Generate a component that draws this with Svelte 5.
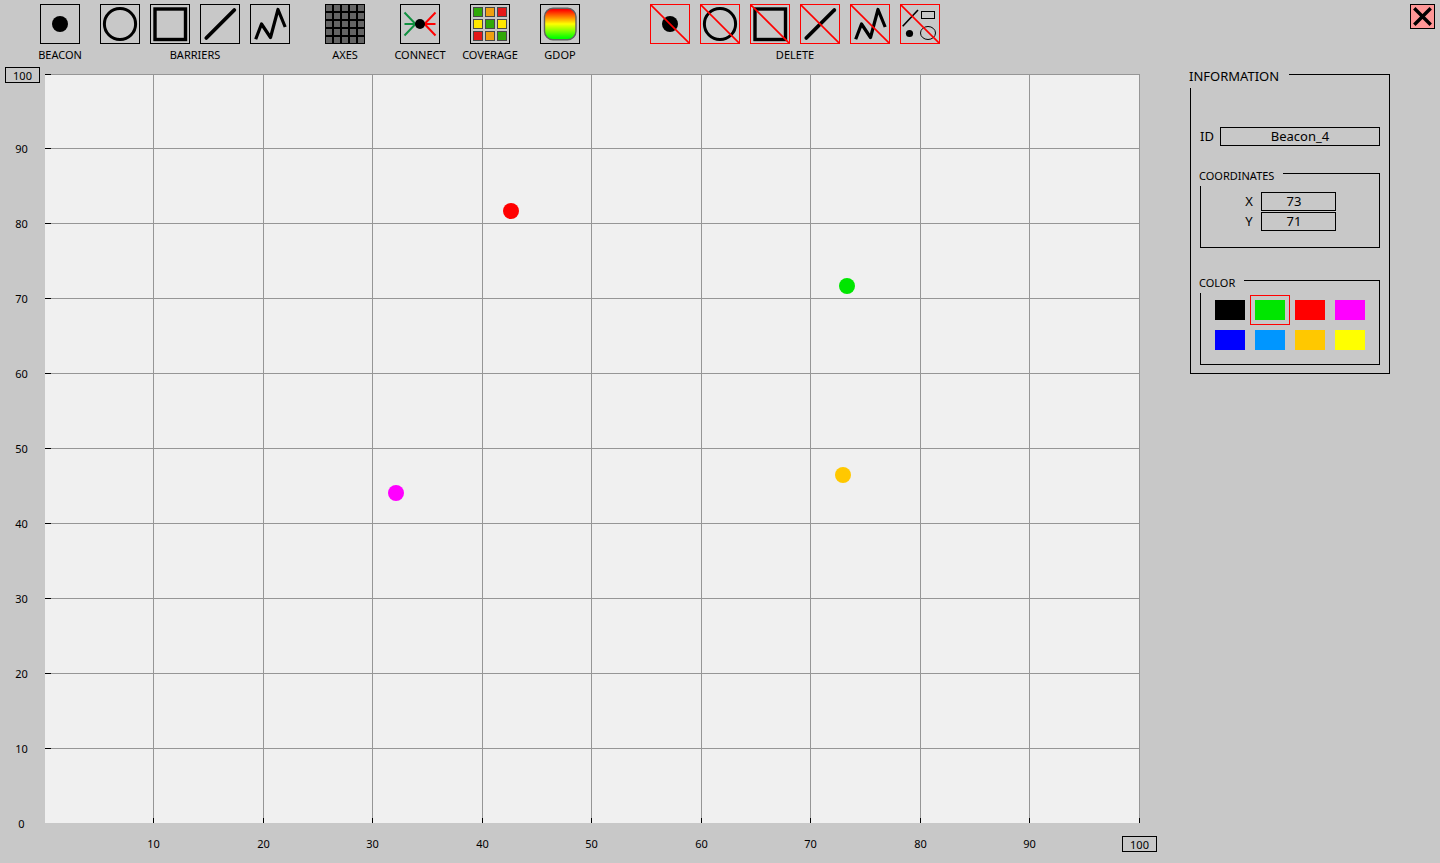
<script>
  const steps = [0, 10, 20, 30, 40, 50, 60, 70, 80, 90];
  const lines = [10, 20, 30, 40, 50, 60, 70, 80, 90, 100];

  const groups = [
    { label: 'BEACON', tools: [{ kind: 'dot', name: 'Add beacon' }] },
    {
      label: 'BARRIERS',
      tools: [
        { kind: 'circle', name: 'Circle barrier' },
        { kind: 'square', name: 'Rectangle barrier' },
        { kind: 'line', name: 'Line barrier' },
        { kind: 'zigzag', name: 'Polyline barrier' }
      ]
    },
    { label: 'AXES', gap: 'wide', tools: [{ kind: 'axes', name: 'Toggle axes' }] },
    { label: 'CONNECT', gap: 'wide', tools: [{ kind: 'connect', name: 'Connect' }] },
    { label: 'COVERAGE', gap: 'medium', tools: [{ kind: 'coverage', name: 'Coverage' }] },
    { label: 'GDOP', gap: 'medium', tools: [{ kind: 'gdop', name: 'GDOP' }] },
    {
      label: 'DELETE',
      gap: 'far',
      remove: true,
      tools: [
        { kind: 'dot', name: 'Delete beacon' },
        { kind: 'circle', name: 'Delete circle' },
        { kind: 'square', name: 'Delete rectangle' },
        { kind: 'line', name: 'Delete line' },
        { kind: 'zigzag', name: 'Delete polyline' },
        { kind: 'all', name: 'Delete everything' }
      ]
    }
  ];

  const cells = ['#30a808', '#f0a010', '#e41818', '#ffe600', '#30a808', '#ffe600', '#e41818', '#f0a010', '#30a808'];

  const beacons = [
    { name: 'Beacon_1', x: 42.56, y: 81.71, color: '#ff0000' },
    { name: 'Beacon_2', x: 32.05, y: 44.06, color: '#ff00ff' },
    { name: 'Beacon_3', x: 72.88, y: 46.46, color: '#ffc800' },
    { name: 'Beacon_4', x: 73.24, y: 71.7, color: '#00e600' }
  ];

  const colors = [
    ['Black', '#000000'],
    ['Green', '#00e600'],
    ['Red', '#ff0000'],
    ['Magenta', '#ff00ff'],
    ['Blue', '#0000ff'],
    ['Azure', '#0096ff'],
    ['Amber', '#ffc800'],
    ['Yellow', '#ffff00']
  ];

  let selected = $state('#00e600');
</script>

{#snippet icon(kind, remove)}
  <svg viewBox="1 1 38 38" aria-hidden="true">
    {#if kind === 'dot'}
      <circle cx="20" cy="20" r="8" />
    {:else if kind === 'circle'}
      <circle cx="20" cy="20" r="15.6" fill="none" stroke="#000" stroke-width="3" />
    {:else if kind === 'square'}
      <rect x="5" y="5" width="30.5" height="30.5" fill="none" stroke="#000" stroke-width="3.4" />
    {:else if kind === 'line'}
      <path d="M6.3 34 34.3 6" stroke="#000" stroke-width="3.8" stroke-linecap="round" />
    {:else if kind === 'zigzag'}
      <path d="M5.7 35.2 11.5 20 20.5 33.5 28 5.5 35.2 23" fill="none" stroke="#000" stroke-width="3.2" stroke-linejoin="round" />
    {:else if kind === 'axes'}
      <rect width="40" height="40" />
      {#each [1, 9, 17, 25, 33] as y}
        {#each [1, 9, 17, 25, 33] as x}
          <rect {x} {y} width="6" height="6" fill="#646464" />
        {/each}
      {/each}
    {:else if kind === 'connect'}
      <path d="M4.5 8.5 15.5 20 4.5 31.5M4.5 20H15.5" fill="none" stroke="#109040" stroke-width="2" />
      <path d="M35.5 8.5 24.5 20 35.5 31.5M35.5 20H24.5" fill="none" stroke="#ff0000" stroke-width="2" />
      <circle cx="20" cy="20" r="5" />
    {:else if kind === 'coverage'}
      {#each cells as fill, i}
        <rect x={3.5 + (i % 3) * 12} y={3.5 + Math.floor(i / 3) * 12} width="9" height="9" {fill} stroke="#484848" />
      {/each}
    {:else if kind === 'gdop'}
      <defs>
        <linearGradient id="gdop-fill" x1="0" y1="0" x2="0" y2="1">
          <stop offset="0.05" stop-color="#ff0000" />
          <stop offset="0.5" stop-color="#ffff00" />
          <stop offset="0.95" stop-color="#00ff00" />
        </linearGradient>
      </defs>
      <rect x="4.5" y="4.2" width="31.5" height="31.5" rx="8.5" fill="url(#gdop-fill)" stroke="#606060" stroke-width="1.4" />
    {:else if kind === 'all'}
      <path d="M2.7 22.3 18 6" stroke="#000" stroke-width="1.6" />
      <rect x="21.5" y="7.5" width="13" height="7" fill="none" stroke="#000" />
      <circle cx="9.5" cy="29.5" r="3.6" />
      <ellipse cx="28" cy="29" rx="7.5" ry="6.5" fill="none" stroke="#000" />
    {/if}
    {#if remove}
      <path d="M0 0 40 40" stroke="#ff0000" stroke-width="1.6" />
    {/if}
  </svg>
{/snippet}

<div class="app">
  <header class="toolbar">
    {#each groups as group}
      <div class="group {group.gap ?? ''}">
        <div class="tools">
          {#each group.tools as tool}
            <button class="tool" class:remove={group.remove} type="button" aria-label={tool.name}>
              {@render icon(tool.kind, group.remove)}
            </button>
          {/each}
        </div>
        <span class="caption">{group.label}</span>
      </div>
    {/each}
    <button class="close" type="button" aria-label="Close">
      <svg viewBox="1 1 23 23" aria-hidden="true">
        <path d="M5.5 5.5 19.5 19.5M19.5 5.5 5.5 19.5" stroke="#000" stroke-width="3.4" stroke-linecap="square" />
      </svg>
    </button>
  </header>

  <main class="workspace">
    <section class="chart" aria-label="Beacon map">
      <div class="axis-y">
        {#each steps as v}
          <span class="mark" style="top: round(down, {100 - v}%, 1px)">{v}</span>
        {/each}
        <input class="mark limit" style="top: 0%" value="100" aria-label="Y axis maximum" />
      </div>
      <div class="plot">
        {#each lines as v}
          <i class="v" style="left: calc(round(down, {v}%, 1px) - 1px)"></i>
          <i class="h" style="top: max(0px, round(up, {100 - v}%, 1px) - 1px)"></i>
        {/each}
        {#each beacons as b}
          <button
            class="beacon"
            type="button"
            aria-label={b.name}
            style="left: {b.x}%; top: {100 - b.y}%; background: {b.color}"
          ></button>
        {/each}
      </div>
      <div class="axis-x">
        {#each steps.slice(1) as v}
          <span class="mark" style="left: round(down, {v}%, 1px)">{v}</span>
        {/each}
        <input class="mark limit" style="left: 100%" value="100" aria-label="X axis maximum" />
      </div>
    </section>

    <fieldset class="panel">
      <legend>INFORMATION</legend>
      <div class="id-row">
        <label for="beacon-id">ID</label>
        <input id="beacon-id" value="Beacon_4" />
      </div>
      <fieldset class="section coordinates">
        <legend>COORDINATES</legend>
        <div class="coord">
          <label for="beacon-x">X</label>
          <input id="beacon-x" value="73" />
        </div>
        <div class="coord">
          <label for="beacon-y">Y</label>
          <input id="beacon-y" value="71" />
        </div>
      </fieldset>
      <fieldset class="section color">
        <legend>COLOR</legend>
        <div class="swatches">
          {#each colors as [name, value]}
            <button
              class="swatch"
              class:selected={selected === value}
              type="button"
              aria-label={name}
              aria-pressed={selected === value}
              onclick={() => (selected = value)}
            >
              <span style="background: {value}"></span>
            </button>
          {/each}
        </div>
      </fieldset>
    </fieldset>
  </main>
</div>

<style>
  :global(body) {
    background: #c8c8c8;
  }

  .app {
    box-sizing: border-box;
    display: flex;
    flex-direction: column;
    min-height: 100vh;
    font: 11px/14px 'Noto Sans', 'Open Sans', sans-serif;
    color: #000;
  }

  .app *,
  .app *::before {
    box-sizing: border-box;
  }

  button,
  input {
    margin: 0;
    padding: 0;
    border: 1px solid #000;
    border-radius: 0;
    background: none;
    font: inherit;
    color: inherit;
  }

  svg {
    display: block;
    width: 100%;
    height: 100%;
  }

  .toolbar {
    display: flex;
    align-items: flex-start;
    height: 74px;
    padding: 4px 5px 0 40px;
  }

  .group {
    display: flex;
    flex-direction: column;
    align-items: center;
    gap: 4px;
    margin-left: 20px;
  }

  .group:first-child {
    margin-left: 0;
  }

  .group.medium {
    margin-left: 30px;
  }

  .group.wide {
    margin-left: 35px;
  }

  .group.far {
    margin-left: 70px;
  }

  .tools {
    display: flex;
    gap: 10px;
  }

  .tool {
    width: 40px;
    height: 40px;
  }

  .tool.remove {
    border-color: #ff0000;
  }

  .caption {
    display: flex;
    justify-content: center;
    width: 40px;
    white-space: nowrap;
  }

  .close {
    width: 25px;
    height: 25px;
    margin-left: auto;
    background: #ff9696;
  }

  .workspace {
    display: flex;
    flex: 1;
    align-items: stretch;
    gap: 50px;
    padding-right: 50px;
  }

  .chart {
    display: grid;
    flex: 1;
    grid-template-columns: 45px 1fr;
    grid-template-rows: minmax(300px, 1fr) 40px;
    min-width: 0;
  }

  .plot,
  .axis-x,
  .axis-y {
    position: relative;
  }

  .plot {
    background: #f0f0f0;
  }

  .axis-x {
    grid-column: 2;
  }

  .mark {
    position: absolute;
    width: 35px;
    height: 16px;
    line-height: 16px;
    text-align: center;
  }

  .axis-y .mark {
    left: 4px;
    margin-top: -7px;
  }

  .axis-x .mark {
    top: 13px;
    margin-left: -18px;
  }

  .axis-y .limit {
    left: 5px;
  }

  .mark.limit {
    line-height: 14px;
  }

  .plot i {
    position: absolute;
    background: #969696;
  }

  .v {
    top: 0;
    bottom: 0;
    width: 1px;
  }

  .h {
    left: 0;
    right: 0;
    height: 1px;
  }

  .v::before,
  .h::before {
    content: '';
    position: absolute;
    bottom: 0;
    left: 0;
    width: 1px;
    height: 5px;
    background: #000;
  }

  .h::before {
    width: 6px;
    height: 1px;
  }

  .beacon {
    position: absolute;
    width: 16px;
    height: 16px;
    margin: -8px 0 0 -8px;
    border: 0;
    border-radius: 50%;
  }

  fieldset {
    min-width: 0;
    margin: 0;
    padding: 0;
    border: 1px solid #000;
  }

  legend {
    display: block;
    background: #c8c8c8;
  }

  .panel {
    align-self: flex-start;
    width: 200px;
    margin-top: -14px;
    padding: 0 9px 8px;
    font-size: 13px;
    line-height: 24px;
  }

  .panel > legend {
    height: 28px;
    margin-left: -11px;
    padding: 4px 10px 0 0;
  }

  .id-row {
    display: flex;
    align-items: center;
    gap: 6px;
    margin-top: 39px;
    line-height: 19px;
  }

  .id-row input {
    flex: 1;
    min-width: 0;
    height: 19px;
    text-align: center;
  }

  .section {
    padding: 0 9px;
    font-size: 11px;
    line-height: 20px;
  }

  .section legend {
    height: 26px;
    margin-left: -11px;
    padding: 6px 9px 0 0;
  }

  .coordinates {
    margin-top: 14px;
    padding-top: 6px;
    padding-bottom: 15px;
  }

  .coord {
    display: flex;
    justify-content: center;
    gap: 7px;
    margin-bottom: 1px;
    font-size: 13px;
    line-height: 19px;
  }

  .coord label {
    width: 10px;
    text-align: center;
  }

  .coord input {
    width: 75px;
    height: 19px;
    padding-right: 9px;
    text-align: center;
  }

  .color {
    margin-top: 19px;
    padding-top: 2px;
    padding-bottom: 9px;
  }

  .swatches {
    display: grid;
    grid-template-columns: repeat(4, 40px);
    grid-auto-rows: 30px;
  }

  .swatch {
    padding: 4px;
    border-color: transparent;
  }

  .swatch span {
    display: block;
    height: 20px;
  }

  .swatch.selected {
    border-color: #ff0000;
  }
</style>
